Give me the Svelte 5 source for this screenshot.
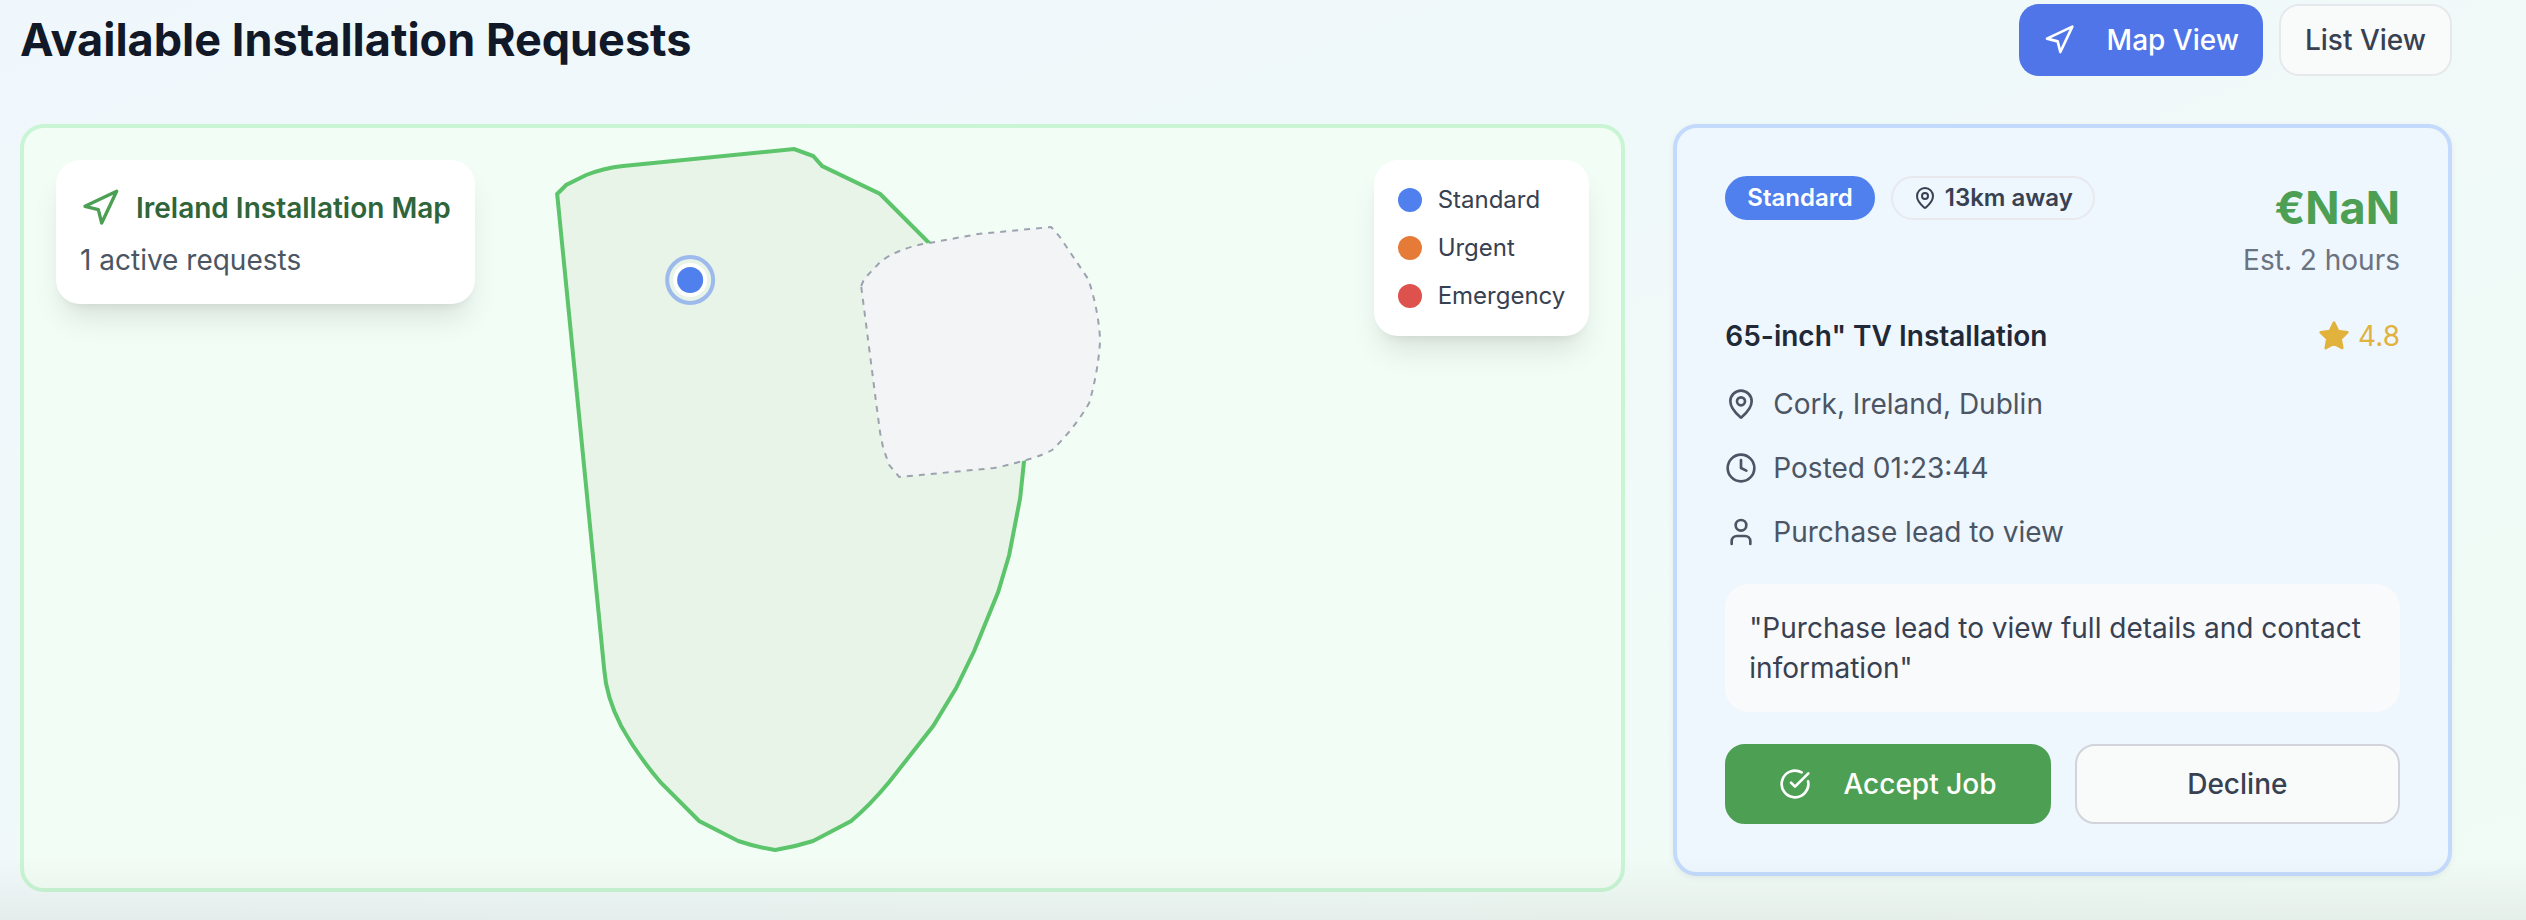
<script>
  const legend = [
    { label: 'Standard', tone: 'standard' },
    { label: 'Urgent', tone: 'urgent' },
    { label: 'Emergency', tone: 'emergency' }
  ];
  let view = $state('map');
</script>

{#snippet navigation()}
  <polygon points="3 11 22 2 13 21 11 13 3 11" />
{/snippet}

{#snippet pin()}
  <path d="M20 10c0 4.993-5.539 10.193-7.399 11.799a1 1 0 0 1-1.202 0C9.539 20.193 4 14.993 4 10a8 8 0 0 1 16 0" />
  <circle cx="12" cy="10" r="3" />
{/snippet}

<main class="page">
  <header class="header">
    <h1>Available Installation Requests</h1>
    <div class="views">
      <button class="btn primary" aria-pressed={view === 'map'} onclick={() => (view = 'map')}>
        <svg class="icon" viewBox="0 0 24 24" aria-hidden="true">{@render navigation()}</svg>
        Map View
      </button>
      <button class="btn plain" aria-pressed={view === 'list'} onclick={() => (view = 'list')}>List View</button>
    </div>
  </header>

  <div class="columns">
    <section class="map">
      <svg class="island" viewBox="24 128 1597 760" aria-hidden="true">
        <path
          class="land"
          d="M557 194L566 185L586 175Q604 168 623 166L794 149L813 156L822 166L880 194L929 243L1000 340L1024 460L1020 498L1009 555L998 592L974 651L956 688L933 726L889 782Q870 805 851 821L813 841Q794 847 775 850Q756 847 738 841L699 821L661 783Q637 755 621 726Q606 697 604 669Z"
        />
        <path
          class="north"
          d="M861 286L864 279L880 262Q898 248 929 243L978 234L1051 227L1059 236L1088 279Q1098 308 1100 340Q1098 372 1089 403Q1074 429 1052 450Q1036 459 994 468L899 477L889 465L883 448L880 433L876 403Z"
        />
        <circle class="pulse" cx="690" cy="280" r="23" />
        <circle class="halo" cx="690" cy="280" r="15" />
        <circle class="dot-fill" cx="690" cy="280" r="13" />
      </svg>

      <div class="overlay info">
        <h2>
          <svg class="icon large" viewBox="0 0 24 24" aria-hidden="true">{@render navigation()}</svg>
          Ireland Installation Map
        </h2>
        <p>1 active requests</p>
      </div>

      <ul class="overlay legend">
        {#each legend as item}
          <li><span class="swatch {item.tone}"></span>{item.label}</li>
        {/each}
      </ul>
    </section>

    <article class="job">
      <div class="top">
        <div class="badges">
          <span class="badge solid">Standard</span>
          <span class="badge outline">
            <svg class="icon small" viewBox="0 0 24 24" aria-hidden="true">{@render pin()}</svg>
            13km away
          </span>
        </div>
        <div class="price">
          <strong>€NaN</strong>
          <span>Est. 2 hours</span>
        </div>
      </div>

      <div class="title-row">
        <h3>65-inch" TV Installation</h3>
        <span class="rating">
          <svg class="icon star" viewBox="0 0 24 24" aria-hidden="true">
            <path d="M12 2l3.09 6.26L22 9.27l-5 4.87 1.18 6.88L12 17.77l-6.18 3.25L7 14.14 2 9.27l6.91-1.01L12 2z" />
          </svg>
          4.8
        </span>
      </div>

      <ul class="facts">
        <li>
          <svg class="icon" viewBox="0 0 24 24" aria-hidden="true">{@render pin()}</svg>
          Cork, Ireland, Dublin
        </li>
        <li>
          <svg class="icon" viewBox="0 0 24 24" aria-hidden="true">
            <circle cx="12" cy="12" r="10" />
            <path d="M12 6v6l4 2" />
          </svg>
          Posted 01:23:44
        </li>
        <li>
          <svg class="icon" viewBox="0 0 24 24" aria-hidden="true">
            <path d="M19 21v-2a4 4 0 0 0-4-4H9a4 4 0 0 0-4 4v2" />
            <circle cx="12" cy="7" r="4" />
          </svg>
          Purchase lead to view
        </li>
      </ul>

      <p class="note">"Purchase lead to view full details and contact information"</p>

      <div class="actions">
        <button class="btn accept">
          <svg class="icon" viewBox="0 0 24 24" aria-hidden="true">
            <path d="M21.801 10A10 10 0 1 1 17 3.335" />
            <path d="m9 11 3 3L22 4" />
          </svg>
          Accept Job
        </button>
        <button class="btn decline">Decline</button>
      </div>
    </article>
  </div>
  <div class="fade"></div>
</main>

<style>
  :global(body) {
    margin: 0;
  }
  .page,
  .page * {
    box-sizing: border-box;
  }
  .page {
    position: relative;
    min-height: 100vh;
    padding: 4px 74px 28px 20px;
    background: linear-gradient(to bottom right, #eff7fc, #f1fcf5);
    font-family: Inter, sans-serif;
    font-size: 28px;
    line-height: 40px;
    color: #374151;
  }
  h1,
  h2,
  h3,
  p,
  ul {
    margin: 0;
    padding: 0;
  }
  ul {
    list-style: none;
  }
  .header {
    display: flex;
    align-items: center;
    justify-content: space-between;
    margin-bottom: 48px;
  }
  h1 {
    font-size: 45px;
    line-height: 72px;
    font-weight: 700;
    color: #111827;
  }
  .views {
    display: flex;
    gap: 16px;
  }
  .btn {
    display: flex;
    align-items: center;
    justify-content: center;
    gap: 32px;
    height: 72px;
    padding: 0 24px;
    border: 2px solid transparent;
    border-radius: 20px;
    font-family: inherit;
    font-size: 28px;
    line-height: 40px;
    font-weight: 500;
    color: #374151;
    white-space: nowrap;
    cursor: pointer;
  }
  .btn.primary {
    border: 0;
    background: #4f75e8;
    color: #fff;
  }
  .btn.plain {
    background: #f9fbfa;
    border-color: #e6e9ec;
  }
  .icon {
    flex: none;
    width: 32px;
    height: 32px;
    fill: none;
    stroke: currentColor;
    stroke-width: 2;
    stroke-linecap: round;
    stroke-linejoin: round;
  }
  .icon.large {
    width: 40px;
    height: 40px;
    color: #4da053;
  }
  .icon.small {
    width: 24px;
    height: 24px;
  }
  .columns {
    display: grid;
    grid-template-columns: repeat(3, minmax(0, 1fr));
    gap: 48px;
    align-items: start;
  }
  .map {
    position: relative;
    grid-column: span 2;
    height: 768px;
    border: 4px solid #c9f5d4;
    border-radius: 24px;
    background: #f2fdf5;
    overflow: hidden;
  }
  .island {
    display: block;
    width: 100%;
    height: 100%;
  }
  .land {
    fill: #e9f4e9;
    stroke: #5cc46a;
    stroke-width: 4;
  }
  .north {
    fill: #f3f4f6;
    stroke: #9ca3af;
    stroke-width: 2;
    stroke-dasharray: 6 6;
  }
  .pulse {
    fill: none;
    stroke: #4f80ee;
    stroke-width: 4;
    opacity: 0.5;
  }
  .halo {
    fill: none;
    stroke: #fff;
    stroke-width: 4;
  }
  .dot-fill {
    fill: #4f80ee;
  }
  .overlay {
    position: absolute;
    top: 32px;
    padding: 24px;
    border-radius: 24px;
    background: #fff;
    box-shadow:
      0 20px 30px -6px rgba(0, 0, 0, 0.1),
      0 8px 12px -8px rgba(0, 0, 0, 0.1);
  }
  .info {
    left: 32px;
    color: #4b5563;
  }
  .info h2 {
    display: flex;
    align-items: center;
    gap: 16px;
    margin-bottom: 8px;
    font-size: 28px;
    line-height: 48px;
    font-weight: 600;
    color: #2f6539;
  }
  .legend {
    right: 32px;
    display: grid;
    gap: 16px;
    font-size: 24px;
    line-height: 32px;
  }
  .legend li {
    display: flex;
    align-items: center;
    gap: 16px;
  }
  .swatch {
    width: 24px;
    height: 24px;
    border-radius: 50%;
  }
  .standard {
    background: #4f80ee;
  }
  .urgent {
    background: #e67b38;
  }
  .emergency {
    background: #de524e;
  }
  .job {
    padding: 48px;
    border: 4px solid #c3dafc;
    border-radius: 24px;
    background: #eef6fe;
    box-shadow: 0 2px 6px rgba(0, 0, 0, 0.06);
  }
  .top,
  .title-row {
    display: flex;
    justify-content: space-between;
    align-items: flex-start;
  }
  .top {
    margin-bottom: 32px;
  }
  .badges {
    display: flex;
    gap: 16px;
  }
  .badge {
    display: flex;
    align-items: center;
    gap: 8px;
    padding: 4px 20px;
    border: 2px solid transparent;
    border-radius: 22px;
    font-size: 24px;
    line-height: 32px;
    font-weight: 600;
    white-space: nowrap;
  }
  .badge.solid {
    border-color: #4f80ee;
    background: #4f80ee;
    color: #fff;
  }
  .badge.outline {
    border-color: #e8e9ed;
  }
  .price {
    display: flex;
    flex-direction: column;
    align-items: flex-end;
    color: #6b7280;
  }
  .price strong {
    font-size: 45px;
    line-height: 64px;
    font-weight: 700;
    color: #4da053;
  }
  .title-row {
    align-items: center;
    margin-bottom: 24px;
  }
  h3 {
    font-size: 28px;
    line-height: 48px;
    font-weight: 600;
    color: #1f2937;
  }
  .rating {
    display: flex;
    align-items: center;
    gap: 8px;
    color: #e1b23c;
  }
  .star {
    fill: currentColor;
  }
  .facts {
    display: grid;
    gap: 24px;
    margin-bottom: 32px;
    color: #4b5563;
  }
  .facts li {
    display: flex;
    align-items: center;
    gap: 16px;
  }
  .note {
    margin-bottom: 32px;
    padding: 24px;
    border-radius: 24px;
    background: #f9fafc;
  }
  .actions {
    display: grid;
    grid-template-columns: 1fr 1fr;
    gap: 24px;
  }
  .actions .btn {
    height: 80px;
  }
  .btn.accept {
    background: #4da053;
    border-color: #4da053;
    color: #fff;
  }
  .btn.decline {
    background: #f9fbfa;
    border-color: #d1d5db;
  }
  .fade {
    position: absolute;
    inset: auto 0 0 0;
    height: 64px;
    background: linear-gradient(to bottom, rgba(0, 0, 0, 0), rgba(0, 0, 0, 0.05));
    pointer-events: none;
  }
</style>
